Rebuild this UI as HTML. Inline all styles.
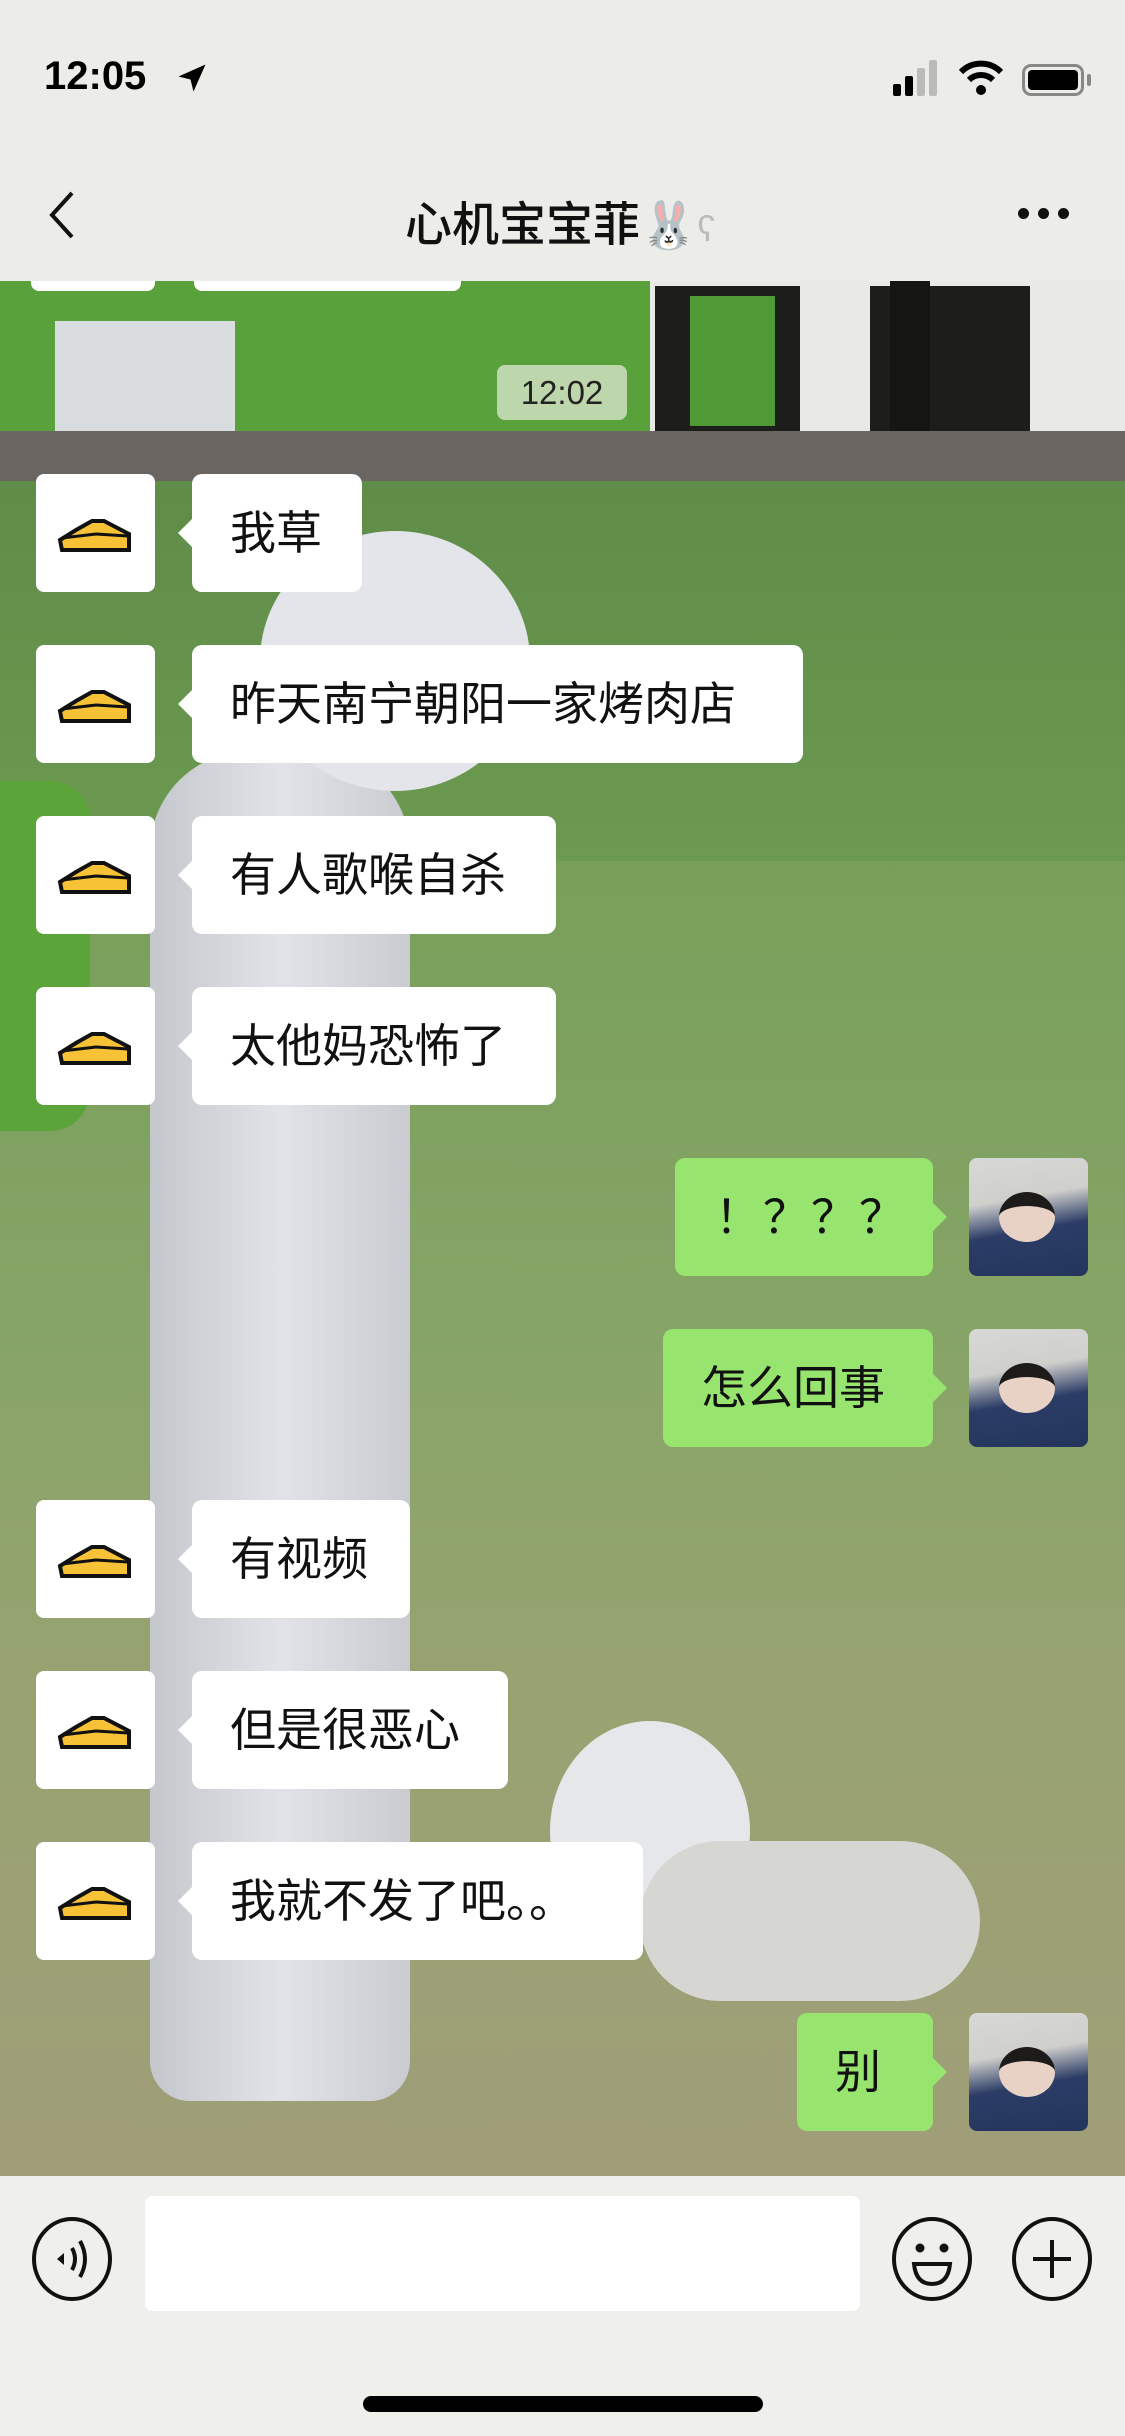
<!DOCTYPE html>
<html><head><meta charset="utf-8">
<style>
*{margin:0;padding:0;box-sizing:border-box}
body{width:1125px;height:2436px;position:relative;overflow:hidden;font-family:"Liberation Sans","Noto Sans CJK SC",sans-serif;background:#7a9a5a}
.bg{position:absolute;left:0;top:281px;width:1125px;height:1895px;overflow:hidden;
background:linear-gradient(180deg,#6f9a55 0%,#789f5a 30%,#86a466 55%,#98a372 75%,#a09e78 100%)}
.abs{position:absolute}
.hdr{position:absolute;left:0;top:0;width:1125px;height:281px;background:#ecece8}
.av{position:absolute;width:119px;height:118px;border-radius:8px;background:#fff}
.b{position:absolute;height:118px;border-radius:10px;background:#fff;font-size:46px;line-height:118px;padding-left:38px;color:#111;white-space:nowrap}
.b.l::before{content:"";position:absolute;left:-14px;top:44px;border:15px solid transparent;border-right-color:#fff;border-left:0}
.b.r{background:#97e56f}
.b.r::after{content:"";position:absolute;right:-14px;top:44px;border:15px solid transparent;border-left-color:#97e56f;border-right:0}
.ra{position:absolute;left:969px;width:119px;height:118px;border-radius:8px;overflow:hidden;background:linear-gradient(170deg,#d8d8d6 0%,#cfcfcc 35%,#2b3c66 60%,#24355c 100%)}
.face{position:absolute;left:30px;top:34px;width:56px;height:50px;border-radius:50%;background:#e8d2c6;border-top:14px solid #1d1a1a}
.bar{position:absolute;left:0;top:2176px;width:1125px;height:260px;background:#efefec}
</style></head><body>
<div class="bg">
 <div class="abs" style="left:0;top:0;width:650px;height:200px;background:#59a23b"></div>
 <div class="abs" style="left:650px;top:0;width:475px;height:200px;background:#e9e9e6"></div>
 <div class="abs" style="left:655px;top:5px;width:145px;height:190px;background:#1d1e1a"></div>
 <div class="abs" style="left:690px;top:15px;width:85px;height:130px;background:#4f9a35"></div>
 <div class="abs" style="left:870px;top:5px;width:160px;height:190px;background:#1d1e1a"></div>
 <div class="abs" style="left:890px;top:0;width:40px;height:275px;background:#151512"></div>
 <div class="abs" style="left:55px;top:40px;width:180px;height:110px;background:#d9dde0"></div>
 <div class="abs" style="left:0;top:150px;width:1125px;height:50px;background:#6a6560"></div>
 <div class="abs" style="left:0;top:200px;width:1125px;height:380px;background:linear-gradient(180deg,#5f8c48,#6c9a50)"></div>
 <div class="abs" style="left:0;top:500px;width:90px;height:350px;border-radius:0 40px 40px 0;background:#5aa43a"></div>
 <div class="abs" style="left:150px;top:470px;width:260px;height:1350px;border-radius:100px 100px 40px 40px;background:linear-gradient(90deg,#c4c7cc,#e2e3e8,#c9cbd0)"></div>
 <div class="abs" style="left:260px;top:250px;width:270px;height:260px;border-radius:50%;background:#e4e5ea"></div>
 <div class="abs" style="left:550px;top:1440px;width:200px;height:220px;border-radius:50%;background:#e6e7ea"></div>
 <div class="abs" style="left:640px;top:1560px;width:340px;height:160px;border-radius:80px;background:#d6d6d2"></div>
</div>
<div class="hdr">
 <div class="abs" style="left:44px;top:54px;font-size:40px;font-weight:bold;color:#000">12:05</div>
 <svg class="abs" style="left:174px;top:60px" width="36" height="36" viewBox="0 0 24 24"><path d="M21 3L3 11l8 2 2 8z" fill="#000"/></svg>
 <div class="abs" style="left:893px;top:84px;width:8px;height:12px;background:#000;border-radius:2px"></div>
 <div class="abs" style="left:905px;top:76px;width:8px;height:20px;background:#000;border-radius:2px"></div>
 <div class="abs" style="left:917px;top:68px;width:8px;height:28px;background:#bbb;border-radius:2px"></div>
 <div class="abs" style="left:929px;top:60px;width:8px;height:36px;background:#bbb;border-radius:2px"></div>
 <svg class="abs" style="left:958px;top:60px" width="46" height="36" viewBox="0 0 46 36"><path d="M3 12 A28 28 0 0 1 43 12" stroke="#000" stroke-width="6" fill="none"/><path d="M11 20 A17 17 0 0 1 35 20" stroke="#000" stroke-width="6" fill="none"/><circle cx="23" cy="30" r="5" fill="#000"/></svg>
 <div class="abs" style="left:1022px;top:64px;width:62px;height:32px;border:3px solid #888;border-radius:9px"><div style="margin:3px;width:50px;height:20px;background:#000;border-radius:4px"></div></div>
 <div class="abs" style="left:1087px;top:74px;width:4px;height:12px;background:#888;border-radius:2px"></div>
 <svg class="abs" style="left:44px;top:190px" width="36" height="50" viewBox="0 0 36 50"><path d="M28 3 L8 25 L28 47" stroke="#111" stroke-width="4" fill="none"/></svg>
 <div class="abs" style="left:405px;top:186px;font-size:47px;font-weight:500;color:#111">心机宝宝菲<span style="font-size:46px">🐰</span><span style="font-size:36px;color:#bbb">ʕ</span></div>
 <div class="abs" style="left:1018px;top:208px;width:11px;height:11px;border-radius:50%;background:#111;box-shadow:20px 0 #111,40px 0 #111"></div>
</div>
<div class="abs" style="left:31px;top:281px;width:124px;height:10px;background:#fff;border-radius:0 0 8px 8px"></div>
<div class="abs" style="left:194px;top:281px;width:267px;height:10px;background:#fff;border-radius:0 0 8px 8px"></div>
<div class="abs" style="left:497px;top:365px;width:130px;height:55px;border-radius:8px;background:rgba(215,228,200,.8);font-size:33px;line-height:55px;text-align:center;color:#222">12:02</div>

<!-- left messages -->
<div class="av" style="left:36px;top:474px"><svg width="119" height="118" viewBox="0 0 119 118"><path d="M24 66 L40 56 L56 47 L68 47 L93 60 L93 76 L26 76 Z" fill="#f7c236" stroke="#111" stroke-width="4"/><path d="M26 64 L60 60 L92 62" stroke="#111" stroke-width="3" fill="none"/></svg></div>
<div class="b l" style="left:192px;top:474px;width:170px">我草</div>
<div class="av" style="left:36px;top:645px"><svg width="119" height="118" viewBox="0 0 119 118"><path d="M24 66 L40 56 L56 47 L68 47 L93 60 L93 76 L26 76 Z" fill="#f7c236" stroke="#111" stroke-width="4"/><path d="M26 64 L60 60 L92 62" stroke="#111" stroke-width="3" fill="none"/></svg></div>
<div class="b l" style="left:192px;top:645px;width:611px">昨天南宁朝阳一家烤肉店</div>
<div class="av" style="left:36px;top:816px"><svg width="119" height="118" viewBox="0 0 119 118"><path d="M24 66 L40 56 L56 47 L68 47 L93 60 L93 76 L26 76 Z" fill="#f7c236" stroke="#111" stroke-width="4"/><path d="M26 64 L60 60 L92 62" stroke="#111" stroke-width="3" fill="none"/></svg></div>
<div class="b l" style="left:192px;top:816px;width:364px">有人歌喉自杀</div>
<div class="av" style="left:36px;top:987px"><svg width="119" height="118" viewBox="0 0 119 118"><path d="M24 66 L40 56 L56 47 L68 47 L93 60 L93 76 L26 76 Z" fill="#f7c236" stroke="#111" stroke-width="4"/><path d="M26 64 L60 60 L92 62" stroke="#111" stroke-width="3" fill="none"/></svg></div>
<div class="b l" style="left:192px;top:987px;width:364px">太他妈恐怖了</div>

<div class="b r" style="left:675px;top:1158px;width:258px;padding-left:40px;letter-spacing:2px">！？？？</div>
<div class="ra" style="top:1158px"><div class="face"></div></div>
<div class="b r" style="left:663px;top:1329px;width:270px;padding-left:38px">怎么回事</div>
<div class="ra" style="top:1329px"><div class="face"></div></div>

<div class="av" style="left:36px;top:1500px"><svg width="119" height="118" viewBox="0 0 119 118"><path d="M24 66 L40 56 L56 47 L68 47 L93 60 L93 76 L26 76 Z" fill="#f7c236" stroke="#111" stroke-width="4"/><path d="M26 64 L60 60 L92 62" stroke="#111" stroke-width="3" fill="none"/></svg></div>
<div class="b l" style="left:192px;top:1500px;width:218px">有视频</div>
<div class="av" style="left:36px;top:1671px"><svg width="119" height="118" viewBox="0 0 119 118"><path d="M24 66 L40 56 L56 47 L68 47 L93 60 L93 76 L26 76 Z" fill="#f7c236" stroke="#111" stroke-width="4"/><path d="M26 64 L60 60 L92 62" stroke="#111" stroke-width="3" fill="none"/></svg></div>
<div class="b l" style="left:192px;top:1671px;width:316px">但是很恶心</div>
<div class="av" style="left:36px;top:1842px"><svg width="119" height="118" viewBox="0 0 119 118"><path d="M24 66 L40 56 L56 47 L68 47 L93 60 L93 76 L26 76 Z" fill="#f7c236" stroke="#111" stroke-width="4"/><path d="M26 64 L60 60 L92 62" stroke="#111" stroke-width="3" fill="none"/></svg></div>
<div class="b l" style="left:192px;top:1842px;width:451px">我就不发了吧。。</div>

<div class="b r" style="left:797px;top:2013px;width:136px;padding-left:38px">别</div>
<div class="ra" style="top:2013px"><div class="face"></div></div>

<div class="bar">
 <div class="abs" style="left:145px;top:20px;width:715px;height:115px;background:#fff;border-radius:8px"></div>
 <svg class="abs" style="left:30px;top:40px" width="84" height="86" viewBox="0 0 84 86"><ellipse cx="42" cy="43" rx="38" ry="40" stroke="#111" stroke-width="4" fill="none"/><path d="M27 43 l7-6 v12z" fill="#111"/><path d="M42 32 q6 11 0 22" stroke="#111" stroke-width="4" fill="none"/><path d="M50 25 q10 18 0 36" stroke="#111" stroke-width="4" fill="none"/></svg>
 <svg class="abs" style="left:890px;top:40px" width="84" height="86" viewBox="0 0 84 86"><ellipse cx="42" cy="43" rx="38" ry="40" stroke="#111" stroke-width="4" fill="none"/><circle cx="30" cy="32" r="4.5" fill="#111"/><circle cx="54" cy="32" r="4.5" fill="#111"/><path d="M24 48 H60 Q58 68 42 68 Q26 68 24 48Z" stroke="#111" stroke-width="4" fill="none"/></svg>
 <svg class="abs" style="left:1010px;top:40px" width="84" height="86" viewBox="0 0 84 86"><ellipse cx="42" cy="43" rx="38" ry="40" stroke="#111" stroke-width="4" fill="none"/><path d="M42 24 V62 M23 43 H61" stroke="#111" stroke-width="4"/></svg>
 <div class="abs" style="left:363px;top:220px;width:400px;height:16px;background:#000;border-radius:8px"></div>
</div>
</body></html>
